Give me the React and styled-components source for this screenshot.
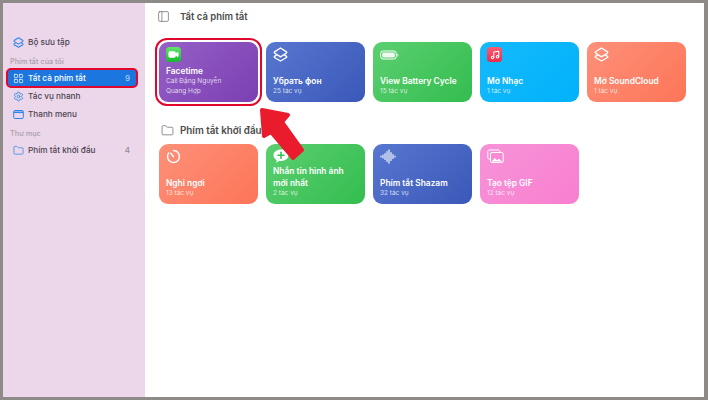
import styled, { createGlobalStyle } from "styled-components";
import { Music, Video, Folder, Settings, PanelLeft, LayoutGrid } from "lucide-react";

const GlobalStyle = createGlobalStyle`
  html, body { margin: 0; padding: 0; }
  body { font-family: "Inter", "Liberation Sans", "Noto Sans", sans-serif; }
`;

const gradients = {
  purple: "linear-gradient(135deg, #9560c6, #7b3fb2)",
  blue: "linear-gradient(135deg, #5877d0, #3a58b8)",
  green: "linear-gradient(135deg, #5ccf70, #33bd4f)",
  sky: "linear-gradient(135deg, #16b9fb, #00b2fb)",
  coral: "linear-gradient(135deg, #fd9079, #fd7558)",
  pink: "linear-gradient(135deg, #f793d8, #f87fd0)",
};

const Screen = styled.div`
  position: relative;
  box-sizing: border-box;
  width: 708px;
  height: 400px;
  overflow: hidden;
  border: 3px solid #8d8a88;
  border-right-width: 4px;
  display: flex;
  background: #ffffff;
`;

const Sidebar = styled.aside`
  width: 142px;
  flex: none;
  background: #ecd6e9;
  padding-top: 30px;
  box-sizing: border-box;
`;

const SideRow = styled.div`
  position: relative;
  height: 18px;
  margin: 0 9px 0 5px;
  padding: 0 6px 0 5px;
  display: flex;
  align-items: center;
  gap: 4px;
  font-size: 8.2px;
  font-weight: 500;
  border-radius: 3px;
  color: ${(p) => (p.$active ? "#ffffff" : "#4a4350")};
  background: ${(p) => (p.$active ? "#1c76e0" : "transparent")};
  svg { flex: none; color: ${(p) => (p.$active ? "#ffffff" : "#2f86ea")}; }
`;

const ActiveRing = styled.div`
  position: absolute;
  inset: -1px -2px;
  border: 2px solid #e1062c;
  border-radius: 5px;
`;

const RowLabel = styled.span`
  flex: 1;
  white-space: nowrap;
`;

const Count = styled.span`
  font-size: 8px;
  color: ${(p) => (p.$active ? "#a9cdf6" : "#8f8792")};
`;

const SideHeading = styled.div`
  font-size: 7.3px;
  font-weight: 500;
  color: #a99fab;
  height: 14px;
  line-height: 14px;
  padding-left: 7px;
  margin-top: 4px;
`;

const Content = styled.main`
  flex: 1;
  min-width: 0;
  padding: 0 0 0 14px;
`;

const TitleBar = styled.div`
  height: 27px;
  margin: 0 0 12px -2px;
  display: flex;
  align-items: center;
  gap: 10px;
  color: #4b4b4b;
  font-size: 9.5px;
  font-weight: 600;
`;

const SectionHead = styled.div`
  height: 20px;
  margin: 18px 0 4px;
  padding-left: 2px;
  display: flex;
  align-items: center;
  gap: 6px;
  color: #4b4b4b;
  font-size: 9.8px;
  font-weight: 600;
`;

const Grid = styled.div`
  display: grid;
  grid-template-columns: repeat(5, 99px);
  column-gap: 8px;
  grid-auto-rows: 60px;
`;

const CardBox = styled.div`
  position: relative;
  box-sizing: border-box;
  border-radius: 9px;
  padding: 5px 7px 6px;
  display: flex;
  flex-direction: column;
  color: #ffffff;
  background: ${(p) => gradients[p.$tone]};
`;

const CardIcon = styled.div`
  height: 15px;
  display: flex;
  align-items: center;
  margin-bottom: auto;
`;

const CardTitle = styled.div`
  font-size: 8.4px;
  font-weight: 600;
  line-height: 12px;
  margin-bottom: -1px;
`;

const CardSub = styled.div`
  font-size: 6.5px;
  line-height: 10px;
  color: rgba(255, 255, 255, 0.78);
`;

const CardRing = styled.div`
  position: absolute;
  inset: -4px;
  border: 2px solid #e1062c;
  border-radius: 12px;
`;

const AppTile = styled.div`
  width: 15px;
  height: 15px;
  border-radius: 3.5px;
  display: flex;
  align-items: center;
  justify-content: center;
  background: ${(p) => p.$bg};
`;

const ArrowMark = styled.svg`
  position: absolute;
  left: 247px;
  top: 97px;
`;

const StackIcon = ({ size = 15 }) => (
  <svg width={size} height={size} viewBox="0 0 15 15" fill="none" stroke="currentColor" strokeWidth="1.4" strokeLinejoin="round" strokeLinecap="round">
    <path d="M7.500 1 L13.500 4.800 Q14 5.500 13.500 6 L7.500 9.800 L1.500 6 Q1 5.500 1.500 4.800 Z" />
    <path d="M3.300 8.200 L1.500 9.300 Q1 10 1.500 10.500 L7.500 14 L13.500 10.500 Q14 10 13.500 9.300 L11.700 8.200" />
  </svg>
);

const BatteryIcon = () => (
  <svg width="19" height="10" viewBox="0 0 19 10" fill="none">
    <rect x="0.700" y="1" width="15.600" height="8" rx="2.400" stroke="#fff" strokeWidth="1" />
    <rect x="2.200" y="2.500" width="12.600" height="5" rx="1.200" fill="#fff" opacity="0.9" />
    <rect x="17.300" y="3.500" width="1" height="3" rx="0.500" fill="#fff" opacity="0.7" />
  </svg>
);

const TimerIcon = () => (
  <svg width="15" height="15" viewBox="0 0 15 15" fill="none" stroke="#fff" strokeWidth="1.400" strokeLinecap="round">
    <path d="M7.500 1.500a6 6 0 1 1-4.800 2.400" />
    <path d="M7.500 7.800L4.800 4.300" />
  </svg>
);

const MessageIcon = () => (
  <svg width="16" height="15" viewBox="0 0 16 15">
    <path d="M8 0.500c4.200 0 7.500 2.500 7.500 5.800S12.200 12 8 12c-.7 0-1.300-.1-1.900-.2-.9.9-2 1.600-3.400 1.900.6-.8 1-1.600 1.100-2.600C1.800 10.100.5 8.400.5 6.300.5 3 3.800.5 8 .5z" fill="#fff" />
    <path d="M8 3.200v6M5 6.200h6" stroke="#38bf54" strokeWidth="1.600" strokeLinecap="round" />
  </svg>
);

const WaveIcon = () => (
  <svg width="16" height="15" viewBox="0 0 16 15" stroke="#fff" strokeWidth="1.100" strokeLinecap="round">
    <path d="M1 7v1M3 6v3M5 4.500v6M7 2.500v10M9 .8v13.400M11 3.500v8M13 5.500v4M15 7v1" />
  </svg>
);

const PhotosIcon = () => (
  <svg width="17" height="15" viewBox="0 0 17 15" fill="none" stroke="#fff" strokeWidth="1">
    <rect x="0.800" y="1" width="12" height="9" rx="1.500" />
    <rect x="3.500" y="3.500" width="12.700" height="10" rx="1.500" fill="#f88ad4" />
    <path d="M4.500 12.500l3.300-3.600 2.300 2.300 1.800-1.500 3.300 2.800z" fill="#fff" stroke="none" />
  </svg>
);

const MenuBarIcon = () => (
  <svg width="11" height="11" viewBox="0 0 11 11" fill="none" stroke="#2f86ea" strokeWidth="1">
    <rect x="0.700" y="1.500" width="9.600" height="8" rx="1.200" />
    <path d="M.7 3.300h9.600" strokeWidth="1.500" />
  </svg>
);

const cardIcons = {
  facetime: (
    <AppTile $bg="linear-gradient(180deg, #63e36b, #16b92f)">
      <Video size={11} fill="#fff" color="#fff" />
    </AppTile>
  ),
  layers: <StackIcon />,
  battery: <BatteryIcon />,
  music: (
    <AppTile $bg="linear-gradient(180deg, #fb5c74, #f02a48)">
      <Music size={10} color="#fff" strokeWidth={2.500} />
    </AppTile>
  ),
  timer: <TimerIcon />,
  message: <MessageIcon />,
  wave: <WaveIcon />,
  photos: <PhotosIcon />,
};

const topCards = [
  { tone: "purple", icon: "facetime", title: "Facetime", lines: ["Call Đặng Nguyễn", "Quang Hợp"], ring: true },
  { tone: "blue", icon: "layers", title: "Убрать фон", lines: ["25 tác vụ"] },
  { tone: "green", icon: "battery", title: "View Battery Cycle", lines: ["15 tác vụ"] },
  { tone: "sky", icon: "music", title: "Mở Nhạc", lines: ["1 tác vụ"] },
  { tone: "coral", icon: "layers", title: "Mở SoundCloud", lines: ["1 tác vụ"] },
];

const starterCards = [
  { tone: "coral", icon: "timer", title: "Nghỉ ngơi", lines: ["13 tác vụ"] },
  { tone: "green", icon: "message", title: "Nhắn tin hình ảnh mới nhất", lines: ["2 tác vụ"] },
  { tone: "blue", icon: "wave", title: "Phím tắt Shazam", lines: ["32 tác vụ"] },
  { tone: "pink", icon: "photos", title: "Tạo tệp GIF", lines: ["12 tác vụ"] },
];

function Card({ tone, icon, title, lines, ring }) {
  return (
    <CardBox $tone={tone}>
      {ring && <CardRing />}
      <CardIcon>{cardIcons[icon]}</CardIcon>
      <CardTitle>{title}</CardTitle>
      {lines.map((line) => (
        <CardSub key={line}>{line}</CardSub>
      ))}
    </CardBox>
  );
}

export default function App() {
  return (
    <>
      <GlobalStyle />
      <Screen>
        <Sidebar>
          <SideRow>
            <StackIcon size={11} />
            <RowLabel>Bộ sưu tập</RowLabel>
          </SideRow>
          <SideHeading>Phím tắt của tôi</SideHeading>
          <SideRow $active>
            <ActiveRing />
            <LayoutGrid size={11} strokeWidth={1.500} />
            <RowLabel>Tất cả phím tắt</RowLabel>
            <Count $active>9</Count>
          </SideRow>
          <SideRow>
            <Settings size={11} strokeWidth={1.800} />
            <RowLabel>Tác vụ nhanh</RowLabel>
          </SideRow>
          <SideRow>
            <MenuBarIcon />
            <RowLabel>Thanh menu</RowLabel>
          </SideRow>
          <SideHeading>Thư mục</SideHeading>
          <SideRow>
            <Folder size={11} strokeWidth={1.600} />
            <RowLabel>Phím tắt khởi đầu</RowLabel>
            <Count>4</Count>
          </SideRow>
        </Sidebar>
        <Content>
          <TitleBar>
            <PanelLeft size={13} strokeWidth={1.300} color="#666" />
            Tất cả phím tắt
          </TitleBar>
          <Grid>
            {topCards.map((card) => (
              <Card key={card.title} {...card} />
            ))}
          </Grid>
          <SectionHead>
            <Folder size={13} strokeWidth={1.200} color="#555" />
            Phím tắt khởi đầu
          </SectionHead>
          <Grid>
            {starterCards.map((card) => (
              <Card key={card.title} {...card} />
            ))}
          </Grid>
        </Content>
        <ArrowMark width="70" height="70" viewBox="250 100 70 70">
          <path
            d="M262 110 L288 115 L282 122 L302 150 L293 158 L271 132 L264 136 Z"
            fill="#ea1b2c"
            stroke="#ea1b2c"
            strokeWidth="4"
            strokeLinejoin="round"
          />
        </ArrowMark>
      </Screen>
    </>
  );
}
